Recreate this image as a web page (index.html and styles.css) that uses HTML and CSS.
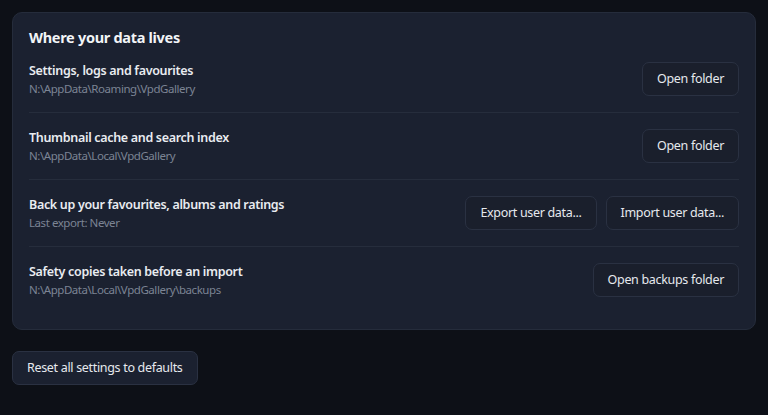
FILE: index.html
```html
<!DOCTYPE html>
<html lang="en">
<head>
<meta charset="utf-8">
<title>Data</title>
<link rel="stylesheet" href="styles.css">
</head>
<body>
<main class="page">
  <section class="card">
    <h2 class="card-title">Where your data lives</h2>
    <div class="row">
      <div class="info">
        <div class="label">Settings, logs and favourites</div>
        <div class="sub">N:\AppData\Roaming\VpdGallery</div>
      </div>
      <div class="actions"><button class="btn">Open folder</button></div>
    </div>
    <div class="row">
      <div class="info">
        <div class="label">Thumbnail cache and search index</div>
        <div class="sub">N:\AppData\Local\VpdGallery</div>
      </div>
      <div class="actions"><button class="btn">Open folder</button></div>
    </div>
    <div class="row">
      <div class="info">
        <div class="label">Back up your favourites, albums and ratings</div>
        <div class="sub">Last export: Never</div>
      </div>
      <div class="actions">
        <button class="btn">Export user data...</button>
        <button class="btn">Import user data...</button>
      </div>
    </div>
    <div class="row">
      <div class="info">
        <div class="label">Safety copies taken before an import</div>
        <div class="sub">N:\AppData\Local\VpdGallery\backups</div>
      </div>
      <div class="actions"><button class="btn">Open backups folder</button></div>
    </div>
  </section>
  <div class="footer">
    <button class="btn">Reset all settings to defaults</button>
  </div>
</main>
</body>
</html>
```

FILE: styles.css
```css
* { box-sizing: border-box; }
html, body { margin: 0; height: 100%; }
body {
  background: #0d1017;
  font-family: "Noto Sans", "Open Sans", sans-serif;
  color: #e8eaee;
  overflow: hidden;
}
.page {
  padding: 12px;
}
.card {
  background: #1b2130;
  border: 1px solid #252c3b;
  border-radius: 10px;
  padding: 16px;
}
.card-title {
  margin: 0;
  font-size: 14.5px;
  line-height: 17px;
  font-weight: 700;
  letter-spacing: -0.3px;
  color: #f2f4f7;
}
.row {
  display: flex;
  align-items: center;
  justify-content: space-between;
  height: 67px;
  padding: 16px 0;
  border-bottom: 1px solid #262d3c;
}
.row:last-child {
  border-bottom: none;
  height: 66px;
}
.info {
  display: flex;
  flex-direction: column;
  padding-top: 1px;
}
.label {
  font-size: 12.5px;
  line-height: 18px;
  font-weight: 600;
  letter-spacing: -0.32px;
  color: #e9ecf0;
}
.sub {
  font-size: 11.5px;
  line-height: 17px;
  letter-spacing: -0.45px;
  color: #7c8494;
}
.actions {
  display: flex;
  gap: 9px;
}
.btn {
  font-family: inherit;
  font-size: 12.5px;
  line-height: 16px;
  height: 34px;
  letter-spacing: -0.32px;
  color: #e6e9ee;
  background: #1a1f2c;
  border: 1px solid #2a3142;
  border-radius: 7px;
  padding: 0 14px;
  cursor: pointer;
}
.footer {
  margin-top: 21px;
}
.footer .btn {
  background: #1b2130;
}
```
